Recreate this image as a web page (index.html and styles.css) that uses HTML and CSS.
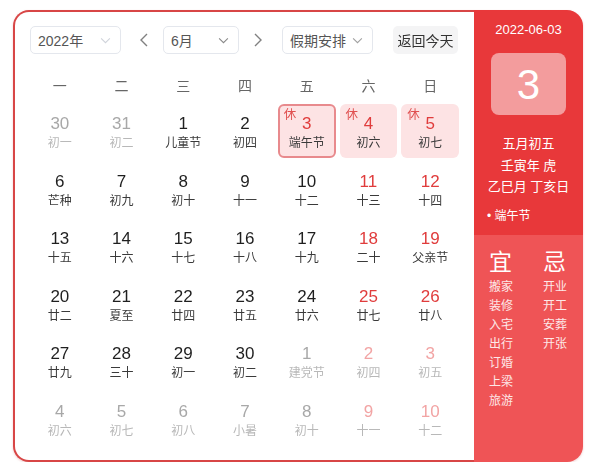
FILE: index.html
```html
<!DOCTYPE html>
<html lang="zh">
<head>
<meta charset="utf-8">
<link rel="stylesheet" href="styles.css">
</head>
<body>
<div class="card">
  <div class="main">
    <div class="toolbar">
      <div class="select sel-year"><span>2022年</span><svg class="chev light" viewBox="0 0 12 8"><path d="M1 1.5 6 6.5 11 1.5"/></svg></div>
      <svg class="arrow" viewBox="0 0 8 14"><path d="M7 1 1 7 7 13"/></svg>
      <div class="select sel-month"><span>6月</span><svg class="chev dark" viewBox="0 0 12 8"><path d="M1 1.5 6 6.5 11 1.5"/></svg></div>
      <svg class="arrow" viewBox="0 0 8 14"><path d="M1 1 7 7 1 13"/></svg>
      <div class="select sel-holiday"><span>假期安排</span><svg class="chev mid" viewBox="0 0 12 8"><path d="M1 1.5 6 6.5 11 1.5"/></svg></div>
      <div class="today-btn">返回今天</div>
    </div>
    <div class="weekdays">
      <span>一</span><span>二</span><span>三</span><span>四</span><span>五</span><span>六</span><span>日</span>
    </div>
    <div class="grid">
      <div class="cell other"><b>30</b><i>初一</i></div>
      <div class="cell other"><b>31</b><i>初二</i></div>
      <div class="cell"><b>1</b><i>儿童节</i></div>
      <div class="cell"><b>2</b><i>初四</i></div>
      <div class="cell rest selected"><em>休</em><b>3</b><i>端午节</i></div>
      <div class="cell rest"><em>休</em><b>4</b><i>初六</i></div>
      <div class="cell rest"><em>休</em><b>5</b><i>初七</i></div>

      <div class="cell"><b>6</b><i>芒种</i></div>
      <div class="cell"><b>7</b><i>初九</i></div>
      <div class="cell"><b>8</b><i>初十</i></div>
      <div class="cell"><b>9</b><i>十一</i></div>
      <div class="cell"><b>10</b><i>十二</i></div>
      <div class="cell we"><b>11</b><i>十三</i></div>
      <div class="cell we"><b>12</b><i>十四</i></div>

      <div class="cell"><b>13</b><i>十五</i></div>
      <div class="cell"><b>14</b><i>十六</i></div>
      <div class="cell"><b>15</b><i>十七</i></div>
      <div class="cell"><b>16</b><i>十八</i></div>
      <div class="cell"><b>17</b><i>十九</i></div>
      <div class="cell we"><b>18</b><i>二十</i></div>
      <div class="cell we"><b>19</b><i>父亲节</i></div>

      <div class="cell"><b>20</b><i>廿二</i></div>
      <div class="cell"><b>21</b><i>夏至</i></div>
      <div class="cell"><b>22</b><i>廿四</i></div>
      <div class="cell"><b>23</b><i>廿五</i></div>
      <div class="cell"><b>24</b><i>廿六</i></div>
      <div class="cell we"><b>25</b><i>廿七</i></div>
      <div class="cell we"><b>26</b><i>廿八</i></div>

      <div class="cell"><b>27</b><i>廿九</i></div>
      <div class="cell"><b>28</b><i>三十</i></div>
      <div class="cell"><b>29</b><i>初一</i></div>
      <div class="cell"><b>30</b><i>初二</i></div>
      <div class="cell other"><b>1</b><i>建党节</i></div>
      <div class="cell other we"><b>2</b><i>初四</i></div>
      <div class="cell other we"><b>3</b><i>初五</i></div>

      <div class="cell other"><b>4</b><i>初六</i></div>
      <div class="cell other"><b>5</b><i>初七</i></div>
      <div class="cell other"><b>6</b><i>初八</i></div>
      <div class="cell other"><b>7</b><i>小暑</i></div>
      <div class="cell other"><b>8</b><i>初十</i></div>
      <div class="cell other we"><b>9</b><i>十一</i></div>
      <div class="cell other we"><b>10</b><i>十二</i></div>
    </div>
  </div>
  <div class="side">
    <div class="side-top">
      <div class="date">2022-06-03</div>
      <div class="bigday">3</div>
      <div class="lunar">
        <div>五月初五</div>
        <div>壬寅年 虎</div>
        <div>乙巳月 丁亥日</div>
      </div>
      <div class="fest">• 端午节</div>
    </div>
    <div class="side-bottom">
      <div class="col">
        <div class="head">宜</div>
        <div>搬家</div><div>装修</div><div>入宅</div><div>出行</div><div>订婚</div><div>上梁</div><div>旅游</div>
      </div>
      <div class="col">
        <div class="head">忌</div>
        <div>开业</div><div>开工</div><div>安葬</div><div>开张</div>
      </div>
    </div>
  </div>
</div>
</body>
</html>
```

FILE: styles.css
```css
* { box-sizing: border-box; }
html, body { margin: 0; padding: 0; background: #fff; }
body {
  font-family: "Liberation Sans", "Noto Sans CJK SC", sans-serif;
  color: #222;
}
.card {
  margin: 10px 0 0 13px;
  width: 570px;
  height: 452px;
  display: flex;
  filter: drop-shadow(0 1px 1px rgba(200, 60, 60, 0.25));
}
.main {
  flex: 1;
  border: 2px solid #d84646;
  border-right: none;
  border-radius: 16px 0 0 16px;
  background: #fff;
  padding: 14px 0 0 15px;
}
.toolbar {
  display: flex;
  align-items: center;
  height: 28px;
}
.select {
  height: 28px;
  border: 1px solid #e4e7ed;
  border-radius: 5px;
  display: flex;
  align-items: center;
  justify-content: space-between;
  padding: 0 9px 0 7px;
  font-size: 14px;
  color: #555;
}
.sel-year { width: 91px; }
.sel-month { width: 76px; }
.sel-holiday { width: 91px; }
.chev { width: 11px; height: 7px; fill: none; stroke-width: 1.2; }
.chev.light { stroke: #cfd3da; }
.chev.dark { stroke: #888; }
.chev.mid { stroke: #a0a0a0; }
.arrow {
  width: 8px; height: 14px;
  fill: none; stroke: #808080; stroke-width: 1.4;
  margin: 0 15px 0 19px;
}
.sel-month + .arrow { margin: 0 20px 0 15px; }
.today-btn {
  margin-left: 20px;
  height: 28px;
  width: 65px;
  background: #f4f4f5;
  border-radius: 5px;
  font-size: 14px;
  color: #333;
  display: flex;
  align-items: center;
  justify-content: center;
}
.weekdays {
  display: grid;
  grid-template-columns: repeat(7, 1fr);
  column-gap: 4px;
  width: 428px;
  margin: 22px 0 0 1px;
  height: 20px;
  line-height: 20px;
  font-size: 14px;
  color: #666;
  text-align: center;
}
.grid {
  display: grid;
  grid-template-columns: repeat(7, 1fr);
  grid-auto-rows: 54px;
  column-gap: 4px;
  row-gap: 3.6px;
  width: 428px;
  margin: 8px 0 0 1px;
}
.cell {
  position: relative;
  border-radius: 6px;
  text-align: center;
  padding-top: 9px;
}
.cell b {
  display: block;
  font-weight: normal;
  font-size: 17px;
  line-height: 22px;
  color: #1f1f1f;
}
.cell i {
  display: block;
  font-style: normal;
  font-size: 12px;
  line-height: 16px;
  color: #3a3a3a;
}
.cell.we b { color: #e03c3c; }
.cell.other b { color: #a8a8a8; }
.cell.other i { color: #b8b8b8; }
.cell.other.we b { color: #f2a4a4; }
.cell.rest { background: #fde3e4; }
.cell.rest b { color: #e03c3c; }
.cell.selected { border: 2px solid #e88a8d; padding-top: 7px; }
.cell em {
  position: absolute;
  top: 4px;
  left: 6px;
  font-style: normal;
  font-size: 12.5px;
  line-height: 14px;
  color: #e05050;
}
.cell.selected em { top: 2px; left: 4px; }
.side {
  width: 109px;
  border-radius: 0 16px 16px 0;
  overflow: hidden;
  display: flex;
  flex-direction: column;
  color: #fff;
}
.side-top {
  background: #e8383a;
  height: 225px;
  padding-top: 12px;
}
.date {
  text-align: center;
  font-size: 13px;
  line-height: 16px;
}
.bigday {
  width: 75px;
  height: 62px;
  margin: 15px auto 0;
  background: #f39c9d;
  border-radius: 8px;
  font-size: 42px;
  line-height: 64px;
  text-align: center;
}
.lunar {
  margin-top: 18px;
  font-size: 13px;
  line-height: 21.5px;
  text-align: center;
}
.fest {
  margin: 10px 0 0 13px;
  font-size: 12px;
  line-height: 16px;
}
.side-bottom {
  flex: 1;
  background: #ef5456;
  display: flex;
  padding: 14px 0 0 15px;
  gap: 30px;
}
.col { width: 24px; font-size: 12px; line-height: 19px; color: #fde8e8; }
.col .head {
  font-size: 23px;
  line-height: 26px;
  color: #fff;
  margin-bottom: 3px;
}
```
